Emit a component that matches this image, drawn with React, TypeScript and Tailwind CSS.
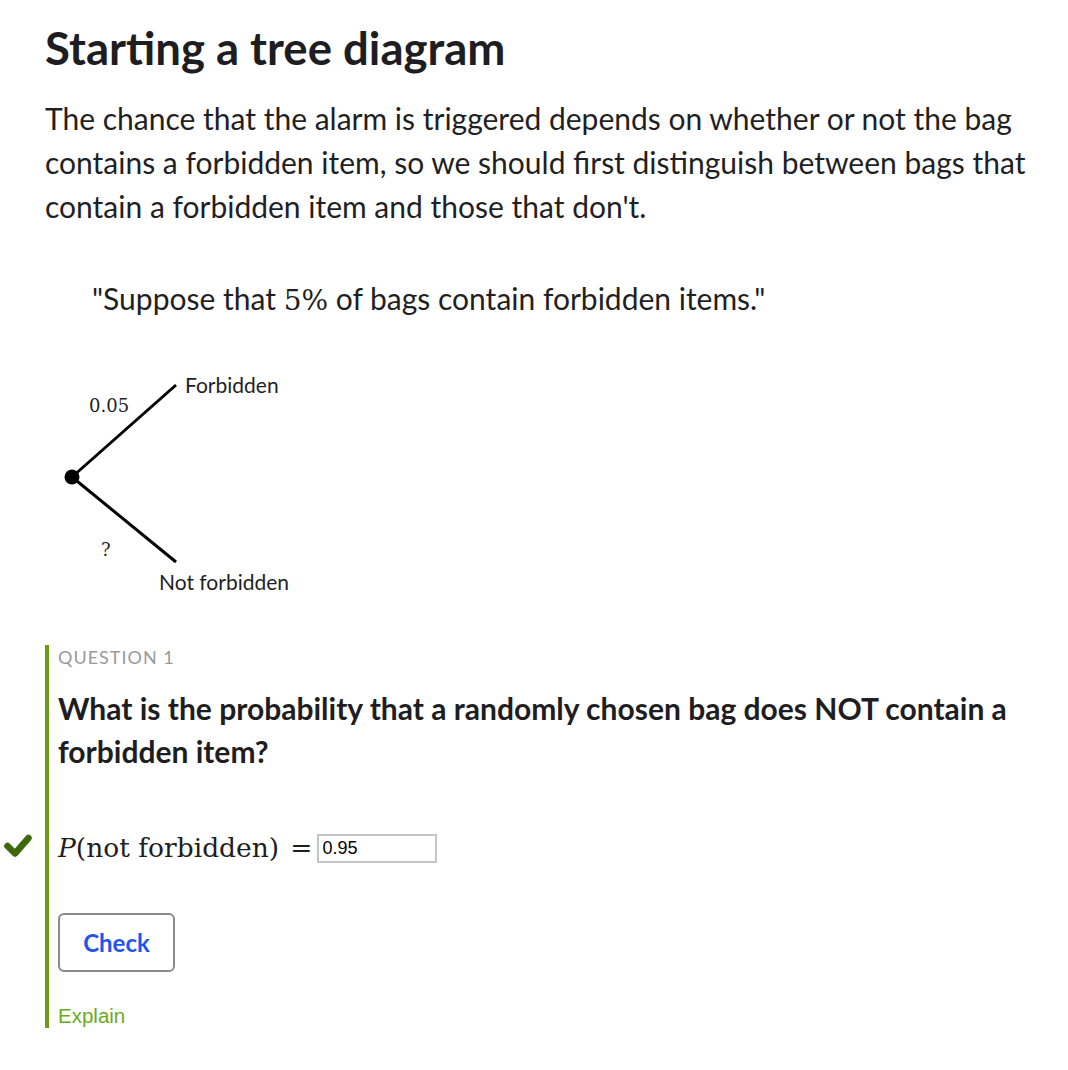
import React from "react";

export default function App() {
  const serif = { fontFamily: '"DejaVu Serif", "Liberation Serif", serif' };
  return (
    <div className="w-[1068px] h-[1070px] bg-white text-[#1f1f24] font-['Lato',sans-serif] pl-[45px] pr-[20px] pt-[24px]">
      <h1 className="text-[45.5px] leading-[48px] font-bold text-[#1d1d22]">
        Starting a tree diagram
      </h1>
      <p className="mt-[24px] text-[30px] leading-[44px] text-[#1f1f24]">
        The chance that the alarm is triggered depends on whether or not the bag contains a forbidden item, so we should first distinguish between bags that contain a forbidden item and those that don't.
      </p>
      <p className="mt-[48px] ml-[47px] text-[30px] leading-[44px]">
        "Suppose that <span className="text-[28px]" style={serif}>5%</span> of bags contain forbidden items."
      </p>

      <div className="relative mt-[40px] h-[282px] w-[300px]">
        <svg className="absolute left-0 top-0" width="300" height="282" viewBox="0 0 300 282">
          <line x1="27" y1="114" x2="131" y2="22" stroke="#000" strokeWidth="3" />
          <line x1="27" y1="114" x2="131" y2="199" stroke="#000" strokeWidth="3" />
          <circle cx="27" cy="114" r="7.5" fill="#000" />
        </svg>
        <span className="absolute left-[44px] top-[31px] text-[18px] leading-[24px]" style={serif}>
          0.05
        </span>
        <span className="absolute left-[56px] top-[175px] text-[18px] leading-[24px]" style={serif}>
          ?
        </span>
        <span className="absolute left-[140px] top-[10px] text-[21px] leading-[24px]">Forbidden</span>
        <span className="absolute left-[114px] top-[207px] text-[21px] leading-[24px]">Not forbidden</span>
      </div>

      <div className="relative border-l-[4px] border-[#6b9b16] pl-[9px]">
        <div className="text-[18px] leading-[24px] tracking-[1px] text-[#9a9a9a]">QUESTION 1</div>
        <p className="mt-[18px] text-[30px] leading-[43px] font-bold text-[#1d1d22]">
          What is the probability that a randomly chosen bag does NOT contain a forbidden item?
        </p>
        <div className="mt-[53px] flex items-center h-[44px]">
          <span className="text-[26.5px] leading-[44px] text-[#1d1d22]" style={serif}>
            <i>P</i>(not forbidden)
          </span>
          <span className="ml-[11px] text-[26.5px] leading-[44px] text-[#1d1d22]" style={serif}>
            =
          </span>
          <div className="ml-[5px] w-[120px] h-[29px] border-2 border-[#c4c4c4] flex items-center pl-[3px] font-['Liberation_Sans',sans-serif] text-[18px] text-black">
            0.95
          </div>
        </div>
        <svg className="absolute left-[-45px] top-[187px]" width="28" height="26" viewBox="0 0 28 26">
          <path d="M3.5 14 L11 21.5 L24.5 6" stroke="#3d690a" strokeWidth="6.5" fill="none" strokeLinecap="round" strokeLinejoin="round" />
        </svg>
        <button className="mt-[43px] w-[117px] h-[59px] border-2 border-[#8a8a8a] rounded-[6px] bg-white text-[#1f55ef] text-[24px] font-bold flex items-center justify-center">
          Check
        </button>
        <div className="mt-[32px] text-[20.5px] leading-[24px] font-['Liberation_Sans',sans-serif] text-[#6aab17]">
          Explain
        </div>
      </div>
    </div>
  );
}
